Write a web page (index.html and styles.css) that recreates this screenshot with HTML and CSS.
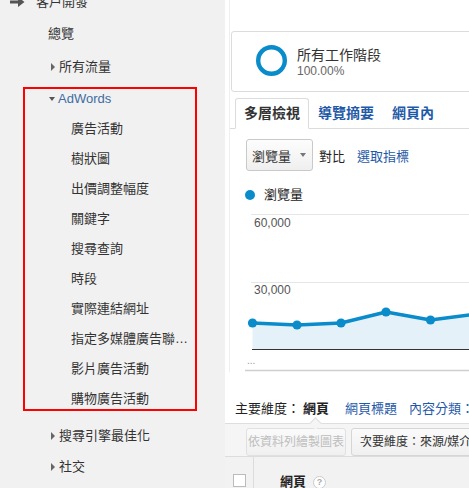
FILE: index.html
```html
<!DOCTYPE html>
<html lang="zh-Hant">
<head>
<meta charset="utf-8">
<title>AdWords</title>
<link rel="stylesheet" href="styles.css">
</head>
<body>
<div class="app">
  <aside class="side">
    <div class="sec-head">
      <svg class="sec-arrow" width="15" height="12" viewBox="0 0 15 12"><path d="M0 4.5H8V1L14.5 6L8 11V7.5H0Z" fill="#555"/></svg>
      <span>客戶開發</span>
    </div>
    <div class="nav-item overview">總覽</div>
    <div class="nav-item collapsed all-traffic"><i class="tri-r"></i>所有流量</div>
    <div class="hl-box">
      <div class="nav-item open"><i class="tri-d"></i>AdWords</div>
      <ul class="sub">
        <li>廣告活動</li>
        <li>樹狀圖</li>
        <li>出價調整幅度</li>
        <li>關鍵字</li>
        <li>搜尋查詢</li>
        <li>時段</li>
        <li>實際連結網址</li>
        <li>指定多媒體廣告聯…</li>
        <li>影片廣告活動</li>
        <li>購物廣告活動</li>
      </ul>
    </div>
    <div class="nav-item collapsed seo"><i class="tri-r"></i>搜尋引擎最佳化</div>
    <div class="nav-item collapsed social"><i class="tri-r"></i>社交</div>
  </aside>

  <main class="main">
    <section class="panel">
      <div class="seg-card">
        <svg class="donut" width="31" height="31" viewBox="0 0 31 31"><circle cx="15.5" cy="15.5" r="13.3" fill="none" stroke="#0a8ccb" stroke-width="4.4"/></svg>
        <div class="seg-text">
          <div class="seg-name">所有工作階段</div>
          <div class="seg-pct">100.00%</div>
        </div>
      </div>

      <nav class="tabs">
        <span class="tab active">多層檢視</span>
        <span class="tab">導覽摘要</span>
        <span class="tab">網頁內</span>
      </nav>

      <div class="controls">
        <span class="metric-btn">瀏覽量<i class="caret"></i></span>
        <span class="vs">對比</span>
        <span class="link">選取指標</span>
      </div>

      <div class="legend"><i class="dot"></i>瀏覽量</div>

      <svg class="chart" width="240" height="167" viewBox="0 0 240 167">
        <line x1="6" y1="9.5" x2="240" y2="9.5" stroke="#e6e6e6" stroke-width="1"/>
        <line x1="6" y1="77.5" x2="240" y2="77.5" stroke="#e6e6e6" stroke-width="1"/>
        <text class="axis" x="9" y="22">60,000</text>
        <text class="axis" x="9" y="89">30,000</text>
        <polygon points="7.5,118 52,120 96,118 141,107 185.5,115 232,109 232,144 7.5,144" fill="#e5f1f9"/>
        <polyline points="7.5,118 52,120 96,118 141,107 185.5,115 232,109" fill="none" stroke="#0a8ccb" stroke-width="3.6" stroke-linejoin="round"/>
        <circle cx="7.5" cy="118" r="4.6" fill="#0a8ccb"/>
        <circle cx="52" cy="120" r="4.6" fill="#0a8ccb"/>
        <circle cx="96" cy="118" r="4.6" fill="#0a8ccb"/>
        <circle cx="141" cy="107" r="4.6" fill="#0a8ccb"/>
        <circle cx="185.5" cy="115" r="4.6" fill="#0a8ccb"/>
        <line x1="7" y1="144.5" x2="240" y2="144.5" stroke="#333" stroke-width="1"/>
        <text class="dots" x="2" y="159">...</text>
        <line x1="0" y1="165.5" x2="240" y2="165.5" stroke="#cfcfcf" stroke-width="1.5"/>
      </svg>
    </section>

    <div class="dims">
      <span class="dim-label">主要維度：</span>
      <span class="dim-cur">網頁</span>
      <span class="link dim-l1">網頁標題</span>
      <span class="link dim-l2">內容分類：</span>
    </div>

    <div class="toolbar">
      <i class="notch"></i>
      <span class="tbtn disabled">依資料列繪製圖表</span>
      <span class="tbtn">次要維度：來源/媒介</span>
    </div>

    <div class="thead">
      <div class="th-check"><i class="checkbox"></i></div>
      <div class="th-page">網頁<i class="help">?</i></div>
    </div>
  </main>
</div>
</body>
</html>
```

FILE: styles.css
```css
* { box-sizing: border-box; }
html, body {
  margin: 0;
  padding: 0;
  width: 469px;
  height: 488px;
  overflow: hidden;
  background: #f1f1f1;
}
body {
  font-family: "Liberation Sans", Arial, "Noto Sans CJK TC", sans-serif;
  font-size: 13px;
  color: #333;
}
.app {
  display: flex;
  width: 469px;
  height: 488px;
  overflow: hidden;
}

/* ---------- sidebar ---------- */
.side {
  flex: 0 0 225px;
  width: 225px;
  background: #f1f1f1;
  display: flex;
  flex-direction: column;
}
.sec-head {
  display: flex;
  align-items: center;
  height: 20px;
  line-height: 20px;
  margin-top: -8px;
  padding-left: 10px;
  color: #333;
}
.sec-arrow { margin-right: 11px; flex: none; }
.nav-item {
  display: flex;
  align-items: center;
  height: 20px;
  line-height: 20px;
  white-space: nowrap;
}
.overview { margin-top: 12px; padding-left: 48px; }
.collapsed { padding-left: 51px; }
.all-traffic { margin-top: 13px; }
.seo { margin-top: 15px; }
.social { margin-top: 11px; }
.tri-r {
  width: 0; height: 0;
  border-left: 4px solid #666;
  border-top: 4px solid transparent;
  border-bottom: 4px solid transparent;
  margin-right: 4px;
}
.tri-d {
  width: 0; height: 0;
  border-top: 4px solid #555;
  border-left: 3.5px solid transparent;
  border-right: 3.5px solid transparent;
  margin-right: 3px;
}
.hl-box {
  margin-top: 10px;
  margin-left: 23px;
  width: 174px;
  border: 2px solid #f00;
}
.open { padding-left: 24px; color: #3f6ca3; }
.sub {
  list-style: none;
  margin: 0;
  padding: 10px 0 0 46px;
  display: flex;
  flex-direction: column;
  gap: 10px;
}
.sub li {
  height: 20px;
  line-height: 20px;
  white-space: nowrap;
}

/* ---------- main ---------- */
.main {
  flex: 1 1 auto;
  min-width: 0;
  background: #fff;
  overflow: hidden;
  display: flex;
  flex-direction: column;
}
.panel {
  margin-left: 4px;
  border-left: 1px solid #efefef;
  padding-top: 31px;
  display: flex;
  flex-direction: column;
  width: 300px;
}
.seg-card {
  margin-left: 1px;
  width: 300px;
  height: 61px;
  border: 1px solid #dcdcdc;
  border-radius: 3px;
  padding: 13px 0 0 24px;
  display: flex;
  align-items: flex-start;
}
.donut { flex: none; margin-right: 10px; }
.seg-text { margin-top: 2px; }
.seg-name { font-size: 14px; line-height: 16px; color: #333; white-space: nowrap; }
.seg-pct { font-size: 12px; line-height: 16px; color: #666; }

.tabs {
  margin-top: 6px;
  padding-left: 5px;
  display: flex;
  border-bottom: 1px solid #dcdcdc;
  width: 300px;
}
.tab {
  height: 31px;
  line-height: 29px;
  padding: 0 8px;
  border: 1px solid transparent;
  margin-bottom: -1px;
  font-size: 14px;
  font-weight: bold;
  color: #1f5aa8;
  white-space: nowrap;
}
.tab.active {
  color: #333;
  background: #fff;
  border-color: #dcdcdc;
  border-bottom-color: #fff;
  border-radius: 3px 3px 0 0;
}

.controls {
  margin-top: 10px;
  margin-left: 16px;
  display: flex;
  align-items: center;
  white-space: nowrap;
}
.metric-btn {
  display: flex;
  align-items: center;
  height: 32px;
  width: 67px;
  padding: 0 0 0 5px;
  border: 1px solid #c9c9c9;
  border-radius: 3px;
  background: linear-gradient(#fdfdfd, #efefef);
  color: #333;
}
.caret {
  width: 0; height: 0;
  margin-left: 9px;
  border-top: 4px solid #777;
  border-left: 3.5px solid transparent;
  border-right: 3.5px solid transparent;
}
.vs { margin-left: 6px; color: #222; }
.link { color: #1f5aa8; }
.controls .link { margin-left: 12px; }

.legend {
  margin-top: 14px;
  margin-left: 15px;
  height: 20px;
  line-height: 20px;
  display: flex;
  align-items: center;
  color: #222;
}
.dot {
  width: 10px; height: 10px;
  border-radius: 50%;
  background: #0a8ccb;
  margin-right: 9px;
}
.chart {
  display: block;
  margin-left: 15px;
  flex: none;
}
.axis {
  font-family: "Liberation Sans", Arial, sans-serif;
  font-size: 12px;
  fill: #555;
}
.dots {
  font-family: "Liberation Sans", Arial, sans-serif;
  font-size: 10px;
  fill: #999;
}

.dims {
  margin-top: 27px;
  padding-left: 10px;
  height: 20px;
  line-height: 20px;
  display: flex;
  white-space: nowrap;
  color: #222;
}
.dim-cur { margin-left: 3px; font-weight: bold; color: #222; }
.dim-l1 { margin-left: 16px; }
.dim-l2 { margin-left: 12px; }

.toolbar {
  position: relative;
  margin-top: 4px;
  height: 38px;
  border-top: 1px solid #dedede;
  background: #f5f5f5;
  padding: 4px 0 0 21px;
  display: flex;
  white-space: nowrap;
}
.notch {
  position: absolute;
  left: 86px;
  top: -5px;
  width: 9px;
  height: 9px;
  background: #f5f5f5;
  border-top: 1px solid #dedede;
  border-left: 1px solid #dedede;
  transform: rotate(45deg);
}
.tbtn {
  height: 28px;
  line-height: 26px;
  border: 1px solid #d6d6d6;
  border-radius: 3px;
  background: linear-gradient(#fafafa, #f0f0f0);
  font-size: 12px;
  padding: 0 8px;
  color: #333;
  flex: none;
}
.tbtn.disabled {
  color: #bdbdbd;
  border-color: #e0e0e0;
  padding: 0 1px;
  margin-right: 5px;
}

.thead {
  flex: 1;
  display: flex;
  border-top: 1px solid #dcdcdc;
  background: #f2f2f2;
}
.th-check {
  width: 29px;
  border-right: 1px solid #dcdcdc;
  padding: 17px 0 0 8px;
  flex: none;
}
.checkbox {
  display: block;
  width: 13px;
  height: 13px;
  border: 1px solid #bbb;
  background: #fff;
}
.th-page {
  padding: 17px 0 0 26px;
  line-height: 16px;
  font-weight: bold;
  color: #222;
  display: flex;
  align-items: flex-start;
  white-space: nowrap;
}
.help {
  margin-left: 7px;
  margin-top: 2px;
  width: 13px;
  height: 13px;
  border-radius: 50%;
  border: 1px solid #ccc;
  background: #fff;
  color: #aaa;
  font-style: normal;
  font-weight: bold;
  font-size: 9px;
  line-height: 11px;
  text-align: center;
}
```
